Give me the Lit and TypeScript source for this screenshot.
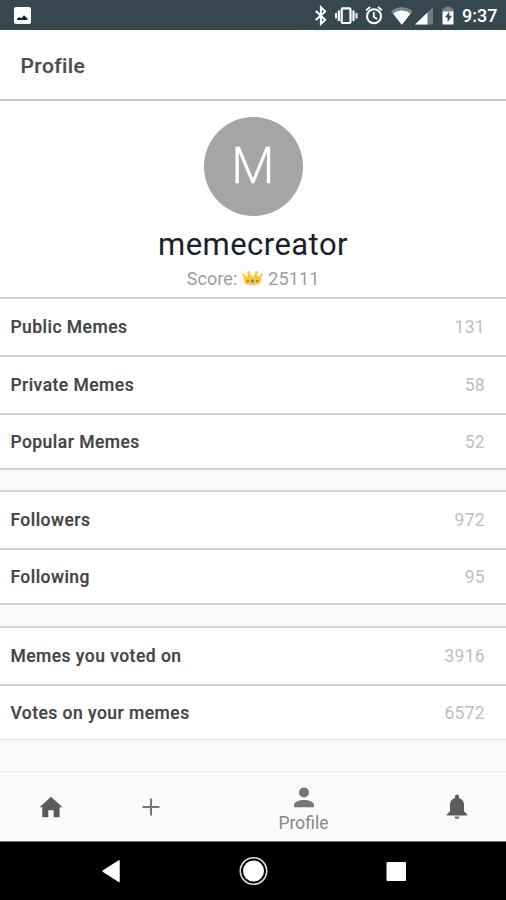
import { LitElement, html, css, svg } from "lit";
import { customElement, property } from "lit/decorators.js";

@customElement("stat-row")
class StatRow extends LitElement {
  @property() label = "";
  @property() value = "";

  static styles = css`
    :host { display: flex; align-items: center; justify-content: space-between; padding: 0 21px 0 10.4px; }
    .label { font-size: 17.5px; font-weight: 500; color: #444; letter-spacing: 0.47px; -webkit-text-stroke: 0.2px #444; }
    .value { font-size: 17.5px; color: #bebebe; letter-spacing: 0.3px; }
  `;

  render() {
    return html`<span class="label">${this.label}</span><span class="value">${this.value}</span>`;
  }
}

const groups: [string, string][][] = [
  [["Public Memes", "131"], ["Private Memes", "58"], ["Popular Memes", "52"]],
  [["Followers", "972"], ["Following", "95"]],
  [["Memes you voted on", "3916"], ["Votes on your memes", "6572"]],
];

const statusIcons = svg`
  <path d="M315.800 11l9.400 8.800-4.300 4.200V7.200l4.300 4.200-9.400 8.600" fill="none" stroke="#fff" stroke-width="2"/>
  <rect x="341.700" y="8.400" width="8.800" height="14.600" rx="1" fill="none" stroke="#fff" stroke-width="2.200"/>
  <path d="M338.800 10.600v10.400M353.500 10.600v10.400" stroke="#fff" stroke-width="2.200"/>
  <path d="M336 13v5.600M356.500 13v5.600" stroke="#fff" stroke-width="1.800"/>
  <circle cx="374" cy="16.200" r="7" fill="none" stroke="#fff" stroke-width="2.100"/>
  <path d="M373.800 12v5l3.400 2M366 10.400l4-3.400M382 10.400l-4-3.400" fill="none" stroke="#fff" stroke-width="1.800"/>
  <path d="M391 11.200a16.500 16.500 0 0 1 21.600 0L401.800 24.800z" fill="#7b878c"/>
  <path d="M393 13.500a14.500 14.500 0 0 1 17.600 0L401.800 24.800z" fill="#fff"/>
  <path d="M433 7v17.500h-18z" fill="#6f7d83"/>
  <path d="M427.500 12.400v12.100h-12.500z" fill="#fff"/>
  <path d="M442.500 10V8.500h3V6.700h5v1.800h3V12h-11z" fill="#7b878c"/>
  <path d="M442.500 11.500h11v13h-11z" fill="#fff"/>
  <path d="M449.300 11.500l-4.300 6h2.600v4.700l4.300-6.400h-2.600z" fill="#37474f"/>`;

@customElement("app-root")
class AppRoot extends LitElement {
  static styles = css`
    :host { display: flex; flex-direction: column; width: 506px; height: 900px; overflow: hidden; background: #fafafa; font-family: Roboto, sans-serif; }
    svg { display: block; flex: none; }
    .status { display: flex; height: 30px; background: #37474f; box-sizing: border-box; }
    .thumb { margin: 7px 0 0 13px; }
    .indicators { margin-left: 268px; }
    .clock { color: #fff; font-size: 18px; font-weight: 500; line-height: 32px; margin-left: 6px; }
    .header { height: 69px; background: #fff; border-bottom: 2px solid #c9c9c9; padding-left: 20.5px; font-size: 21px; font-weight: 500; line-height: 72px; color: #4c4c4c; letter-spacing: 0.42px; -webkit-text-stroke: 0.2px #4c4c4c; }
    .hero { height: 196px; background: #fff; display: flex; flex-direction: column; align-items: center; }
    .avatar { width: 99px; height: 99px; margin-top: 16px; border-radius: 50%; background: #a5a5a5; color: #fff; font-size: 50px; font-weight: 300; line-height: 98px; text-align: center; -webkit-text-stroke: 0.3px #fff; }
    .name { margin-top: 9px; height: 40px; line-height: 40px; font-size: 31px; color: #17212a; letter-spacing: 0.45px; }
    .score { display: flex; align-items: center; height: 26px; color: #9d9d9d; font-size: 18px; letter-spacing: 0.08px; }
    .crown { margin: 0 5px; }
    .group { background: #fff; border-top: 2px solid #d2d2d2; border-bottom: 2px solid #d0d0d0; margin-bottom: 21px; }
    .group:first-of-type { margin-bottom: 20px; }
    .group:last-of-type { border-bottom: 1px solid #e0e0e0; margin-bottom: 0; }
    .row { height: 56px; }
    .row + .row { border-top: 2px solid #d2d2d2; }
    .row:last-child { height: 53px; }
    .nav { margin-top: auto; height: 69px; display: grid; grid-template-columns: 101px 99px 207px 99px; border-top: 1px solid #ededed; border-bottom: 1px solid #777; }
    .tab { display: flex; flex-direction: column; align-items: center; justify-content: center; padding-top: 1px; }
    .profile { justify-content: flex-start; padding-top: 15px; color: #888; font-size: 17.5px; line-height: 22px; letter-spacing: 0; }
    .profile svg { margin-bottom: 4px; }
    .system { height: 58px; background: #000; }
  `;

  render() {
    return html`
      <div class="status">
        <svg class="thumb" width="18" height="18" viewBox="0 0 18 18">
          <rect x="1" width="17" height="17" rx="2" fill="#fff"/>
          <path d="M4 13v-1.500l2.500-1.200 2 1 2.500-3 3.500 3.200V13z" fill="#162229"/>
        </svg>
        <svg class="indicators" width="157" height="30" viewBox="299 0 157 30">${statusIcons}</svg>
        <span class="clock">9:37</span>
      </div>
      <div class="header">Profile</div>
      <div class="hero">
        <div class="avatar">M</div>
        <div class="name">memecreator</div>
        <div class="score">
          <span>Score:</span>
          <svg class="crown" width="21" height="16" viewBox="0 0 21 16">
            <path d="M1 5l3.500 1.500L6.800 3l3.700 3.500L14.200 3l2.300 3.500L20 5l-1.800 9q-7.700 1.800-15.400 0z" fill="#fdca35"/>
            <circle cx="1.400" cy="4.800" r="1.300" fill="#fdca35"/><circle cx="6.700" cy="2.600" r="1.500" fill="#fdca35"/>
            <circle cx="14.300" cy="2.600" r="1.500" fill="#fdca35"/><circle cx="19.600" cy="4.800" r="1.300" fill="#fdca35"/>
            <circle cx="5.800" cy="11" r="1.300" fill="#e4622f"/><circle cx="10.500" cy="11" r="1.700" fill="#3ba4b8"/>
            <circle cx="15.200" cy="11" r="1.300" fill="#e4622f"/>
          </svg>
          <span>25111</span>
        </div>
      </div>
      ${groups.map((rows) => html`<section class="group">
        ${rows.map(([label, value]) => html`<stat-row class="row" .label=${label} .value=${value}></stat-row>`)}
      </section>`)}
      <div class="nav">
        <div class="tab"><svg width="24" height="22" viewBox="0 0 24 22"><path d="M12 .7L.5 11.300H3.300V21.200H9.300V14.200h5.400v7h5.900v-9.900h3z" fill="#5a5a5a"/></svg></div>
        <div class="tab"><svg width="18" height="18" viewBox="0 0 18 18"><path d="M9 .5v17M.5 9h17" stroke="#777" stroke-width="2"/></svg></div>
        <div class="tab profile">
          <svg width="20" height="21" viewBox="0 0 20 21"><circle cx="10" cy="5.500" r="5" fill="#757575"/><path d="M0 20.300v-2.300c0-3.500 5.500-5 10-5s10 1.500 10 5v2.300z" fill="#757575"/></svg>
          Profile
        </div>
        <div class="tab"><svg width="20" height="26" viewBox="0 0 20 26"><path d="M8 4V2.500a2 2 0 0 1 4 0V4c3.300.9 5 3.500 5 6.800v6.500l3 3v1.200H0v-1.200l3-3v-6.500C3 7.500 4.700 4.900 8 4z" fill="#5c5c5c"/><path d="M7.500 22.500h5a2.500 2.500 0 0 1-5 0z" fill="#777"/></svg></div>
      </div>
      <svg class="system" width="506" height="58" viewBox="0 0 506 58">
        <path d="M119 19v20.400L103 29.200z" fill="#fff" stroke="#fff" stroke-width="1.500" stroke-linejoin="round"/>
        <circle cx="253.500" cy="29" r="13.200" fill="none" stroke="#ddd" stroke-width="1.600"/>
        <circle cx="253.500" cy="29" r="10.500" fill="#fff"/>
        <rect x="386.500" y="20" width="19.500" height="19" rx="1" fill="#fff"/>
      </svg>
    `;
  }
}
